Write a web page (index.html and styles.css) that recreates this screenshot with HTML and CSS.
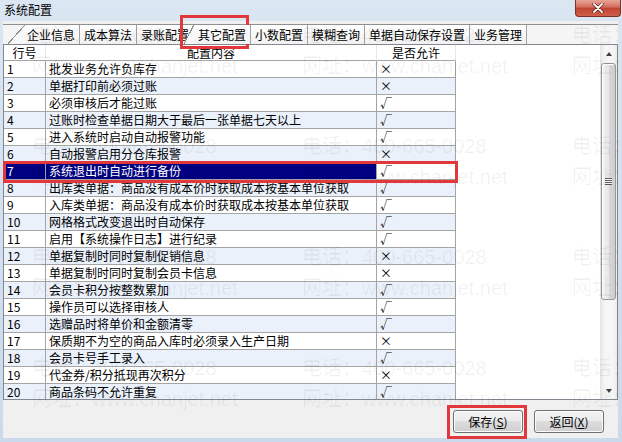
FILE: index.html
```html
<!DOCTYPE html>
<html lang="zh-CN">
<head>
    <meta charset="UTF-8">
    <title>系统配置</title>
    <link rel="stylesheet" href="styles.css">
</head>
<body>
    <div class="window">
        <div class="titlebar">
            <span class="title">系统配置</span>
            <div class="close-btn">
                <svg width="12" height="10" viewBox="0 0 12 10">
                    <path d="M2 1 L10 9 M10 1 L2 9" stroke="#5a1d16" stroke-width="3.2" stroke-linecap="round"/>
                    <path d="M2 1 L10 9 M10 1 L2 9" stroke="#fff" stroke-width="1.8" stroke-linecap="round"/>
                </svg>
            </div>
        </div>

        <div class="client">
            <div class="tabbar">
                <div class="tab first">企业信息</div>
                <div class="tab">成本算法</div>
                <div class="tab">录账配置</div>
                <div class="tab active">其它配置</div>
                <div class="tab">小数配置</div>
                <div class="tab">模糊查询</div>
                <div class="tab">单据自动保存设置</div>
                <div class="tab">业务管理</div>
            </div>

            <div class="grid">
                <div class="grid-body">
                    <div class="row head"><div class="cell">行号</div><div class="cell">配置内容</div><div class="cell">是否允许</div></div>
                    <div class="row"><div class="cell">1</div><div class="cell">批发业务允许负库存</div><div class="cell">×</div></div>
                    <div class="row"><div class="cell">2</div><div class="cell">单据打印前必须过账</div><div class="cell">×</div></div>
                    <div class="row"><div class="cell">3</div><div class="cell">必须审核后才能过账</div><div class="cell">√</div></div>
                    <div class="row"><div class="cell">4</div><div class="cell">过账时检查单据日期大于最后一张单据七天以上</div><div class="cell">√</div></div>
                    <div class="row"><div class="cell">5</div><div class="cell">进入系统时启动自动报警功能</div><div class="cell">√</div></div>
                    <div class="row"><div class="cell">6</div><div class="cell">自动报警启用分仓库报警</div><div class="cell">×</div></div>
                    <div class="row sel"><div class="cell">7</div><div class="cell">系统退出时自动进行备份</div><div class="cell">√</div></div>
                    <div class="row"><div class="cell">8</div><div class="cell">出库类单据：商品没有成本价时获取成本按基本单位获取</div><div class="cell">√</div></div>
                    <div class="row"><div class="cell">9</div><div class="cell">入库类单据：商品没有成本价时获取成本按基本单位获取</div><div class="cell">√</div></div>
                    <div class="row"><div class="cell">10</div><div class="cell">网格格式改变退出时自动保存</div><div class="cell">√</div></div>
                    <div class="row"><div class="cell">11</div><div class="cell">启用【系统操作日志】进行纪录</div><div class="cell">√</div></div>
                    <div class="row"><div class="cell">12</div><div class="cell">单据复制时同时复制促销信息</div><div class="cell">×</div></div>
                    <div class="row"><div class="cell">13</div><div class="cell">单据复制时同时复制会员卡信息</div><div class="cell">×</div></div>
                    <div class="row"><div class="cell">14</div><div class="cell">会员卡积分按整数累加</div><div class="cell">√</div></div>
                    <div class="row"><div class="cell">15</div><div class="cell">操作员可以选择审核人</div><div class="cell">√</div></div>
                    <div class="row"><div class="cell">16</div><div class="cell">选赠品时将单价和金额清零</div><div class="cell">√</div></div>
                    <div class="row"><div class="cell">17</div><div class="cell">保质期不为空的商品入库时必须录入生产日期</div><div class="cell">×</div></div>
                    <div class="row"><div class="cell">18</div><div class="cell">会员卡号手工录入</div><div class="cell">√</div></div>
                    <div class="row"><div class="cell">19</div><div class="cell">代金券/积分抵现再次积分</div><div class="cell">×</div></div>
                    <div class="row"><div class="cell">20</div><div class="cell">商品条码不允许重复</div><div class="cell">√</div></div>
                </div>

                <div class="scrollbar">
                    <div class="sb-btn"><span class="arrow-up"></span></div>
                    <div class="sb-thumb"><span class="grip"></span></div>
                    <div class="sb-track"></div>
                    <div class="sb-btn"><span class="arrow-down"></span></div>
                </div>
            </div>

            <div class="footer">
                <button class="btn">保存(<u>S</u>)</button>
                <button class="btn">返回(<u>X</u>)</button>
            </div>
        </div>

        <!-- vendor watermark -->
        <div class="watermark">
            <div class="wm"><span>电话：400-665-0028</span><span>网址：www.chanjet.net</span></div>
            <div class="wm"><span>电话：400-665-0028</span><span>网址：www.chanjet.net</span></div>
            <div class="wm"><span>电话：400-665-0028</span><span>网址：www.chanjet.net</span></div>
            <div class="wm"><span>电话：400-665-0028</span><span>网址：www.chanjet.net</span></div>
            <div class="wm"><span>电话：400-665-0028</span><span>网址：www.chanjet.net</span></div>
            <div class="wm"><span>电话：400-665-0028</span><span>网址：www.chanjet.net</span></div>
            <div class="wm"><span>电话：400-665-0028</span><span>网址：www.chanjet.net</span></div>
            <div class="wm"><span>电话：400-665-0028</span><span>网址：www.chanjet.net</span></div>
            <div class="wm"><span>电话：400-665-0028</span><span>网址：www.chanjet.net</span></div>
            <div class="wm"><span>电话：400-665-0028</span><span>网址：www.chanjet.net</span></div>
            <div class="wm"><span>电话：400-665-0028</span><span>网址：www.chanjet.net</span></div>
            <div class="wm"><span>电话：400-665-0028</span><span>网址：www.chanjet.net</span></div>
        </div>

        <!-- red highlight frames -->
        <div class="mark mark-tab"></div>
        <div class="mark mark-row"></div>
        <div class="mark mark-save"></div>
    </div>
</body>
</html>
```

FILE: styles.css
```css
* {
    box-sizing: border-box;
}

body {
    margin: 0;
    font-family: "Noto Sans CJK SC", sans-serif;
    font-size: 12px;
    color: #000;
}

.window {
    position: relative;
    width: 622px;
    height: 442px;
    display: flex;
    flex-direction: column;
    padding: 0 4px 4px 3px;
    background: linear-gradient(#dbe6f3, #cadaec);
    overflow: hidden;
}

/* title bar */
.titlebar {
    height: 21px;
    display: flex;
    justify-content: space-between;
    align-items: flex-start;
}

.title {
    line-height: 20px;
    padding-left: 1px;
}

.close-btn {
    width: 46px;
    height: 17px;
    margin-right: -3px;
    border: 1px solid #7a3127;
    border-top: none;
    border-radius: 0 0 4px 4px;
    background: linear-gradient(#e6a597, #d36d5d 45%, #c14332 50%, #d0604b);
    display: flex;
    align-items: center;
    justify-content: center;
}

.client {
    flex: 1;
    display: flex;
    flex-direction: column;
    background: #f0f0f0;
    padding-top: 3px;
    min-height: 0;
}

/* tabs */
.tabbar {
    height: 20px;
    display: flex;
    border-top: 1px solid #8e8f8f;
    background: #f5f5f5;
    padding-left: 22px;
}

.tab {
    position: relative;
    padding: 0 4px;
    line-height: 19px;
    border-right: 1px solid #a0a0a0;
    background: linear-gradient(#ffffff, #f1f1f1);
    white-space: nowrap;
}

.tab.first {
    padding-left: 2px;
}

.tab.first::before,
.tab.active::before {
    content: "";
    position: absolute;
    top: 0;
    bottom: 0;
    left: -17px;
    width: 17px;
    background: linear-gradient(to bottom right,
        transparent calc(50% - 0.7px),
        #8e8f8f calc(50% - 0.7px),
        #8e8f8f calc(50% + 0.4px),
        #f8f8f8 calc(50% + 0.4px));
}

.tab.active {
    z-index: 1;
}

.tab.active::before {
    left: -10px;
    width: 10px;
}

/* grid */
.grid {
    flex: 1;
    display: flex;
    border: 1px solid #828790;
    background: #fff;
    min-height: 0;
}

.grid-body {
    flex: 1;
    overflow: hidden;
}

.row {
    display: grid;
    grid-template-columns: 42px 331px 79px;
    width: 452px;
    height: 17px;
}

.row.head {
    height: 16px;
}

.cell {
    border-right: 1px solid #a5a5a5;
    border-bottom: 1px solid #a5a5a5;
    padding-left: 3px;
    line-height: 16px;
    white-space: nowrap;
    overflow: hidden;
}

.row.head .cell {
    text-align: center;
    padding-left: 0;
    line-height: 15px;
    border-right-color: #e6e6e6;
}

.row:nth-child(odd):not(.head) .cell {
    background: #eaf1fb;
}

.row.sel .cell {
    background: #000080;
    color: #fff;
}

.row.sel .cell:last-child {
    background: #fff;
    color: #000;
}

/* scrollbar */
.scrollbar {
    width: 17px;
    display: flex;
    flex-direction: column;
    border-left: 1px solid #e4e4e4;
    background: linear-gradient(to right, #e9e9e9, #f6f6f6 25%, #f6f6f6 75%, #ececec);
}

.sb-btn {
    height: 17px;
    display: flex;
    align-items: center;
    justify-content: center;
}

.arrow-up {
    border-left: 3.5px solid transparent;
    border-right: 3.5px solid transparent;
    border-bottom: 4px solid #3f3f3f;
}

.arrow-down {
    border-left: 3.5px solid transparent;
    border-right: 3.5px solid transparent;
    border-top: 4px solid #3f3f3f;
}

.sb-thumb {
    height: 237px;
    margin: 1px 1px 0 0;
    border: 1px solid #989898;
    border-radius: 3px;
    background: linear-gradient(to right, #f4f4f4, #e7e7e7 50%, #d8d8d8 51%, #cdcdcd);
    box-shadow: inset 1px 1px 0 #fff;
    display: flex;
    align-items: center;
    justify-content: center;
}

.grip {
    width: 7px;
    height: 7px;
    background: repeating-linear-gradient(#5e5e5e 0 1px, #f6f6f6 1px 2px);
}

.sb-track {
    flex: 1;
}

/* buttons */
.footer {
    height: 38px;
    display: flex;
    justify-content: flex-end;
    gap: 11px;
    padding: 10px 14px 0 0;
}

.btn {
    width: 70px;
    height: 23px;
    padding: 0;
    font: inherit;
    color: #000;
    border: 1px solid #707070;
    border-radius: 3px;
    background: linear-gradient(#f2f2f2, #ebebeb 50%, #dddddd 50%, #cfcfcf);
    box-shadow: inset 0 0 0 1px #fbfbfb;
}

.btn u {
    text-underline-offset: 1px;
}

/* watermark over the whole dialog */
.watermark {
    position: absolute;
    inset: 0;
    padding: 20px 0 0 32px;
    display: grid;
    grid-template-columns: repeat(3, 270px);
    grid-auto-rows: 111px;
    font-family: "Liberation Sans", "Noto Sans CJK SC", sans-serif;
    font-size: 20px;
    line-height: 31px;
    color: rgba(0, 0, 0, 0.06);
    white-space: nowrap;
    pointer-events: none;
    overflow: hidden;
}

.wm {
    display: flex;
    flex-direction: column;
}

.mark {
    position: absolute;
    border: 3px solid #e2373b;
    pointer-events: none;
}

.mark-tab {
    left: 180px;
    top: 15px;
    width: 69px;
    height: 34px;
}

.mark-row {
    left: 3px;
    top: 161px;
    width: 455px;
    height: 22px;
}

.mark-save {
    left: 447px;
    top: 405px;
    width: 80px;
    height: 34px;
}
```
